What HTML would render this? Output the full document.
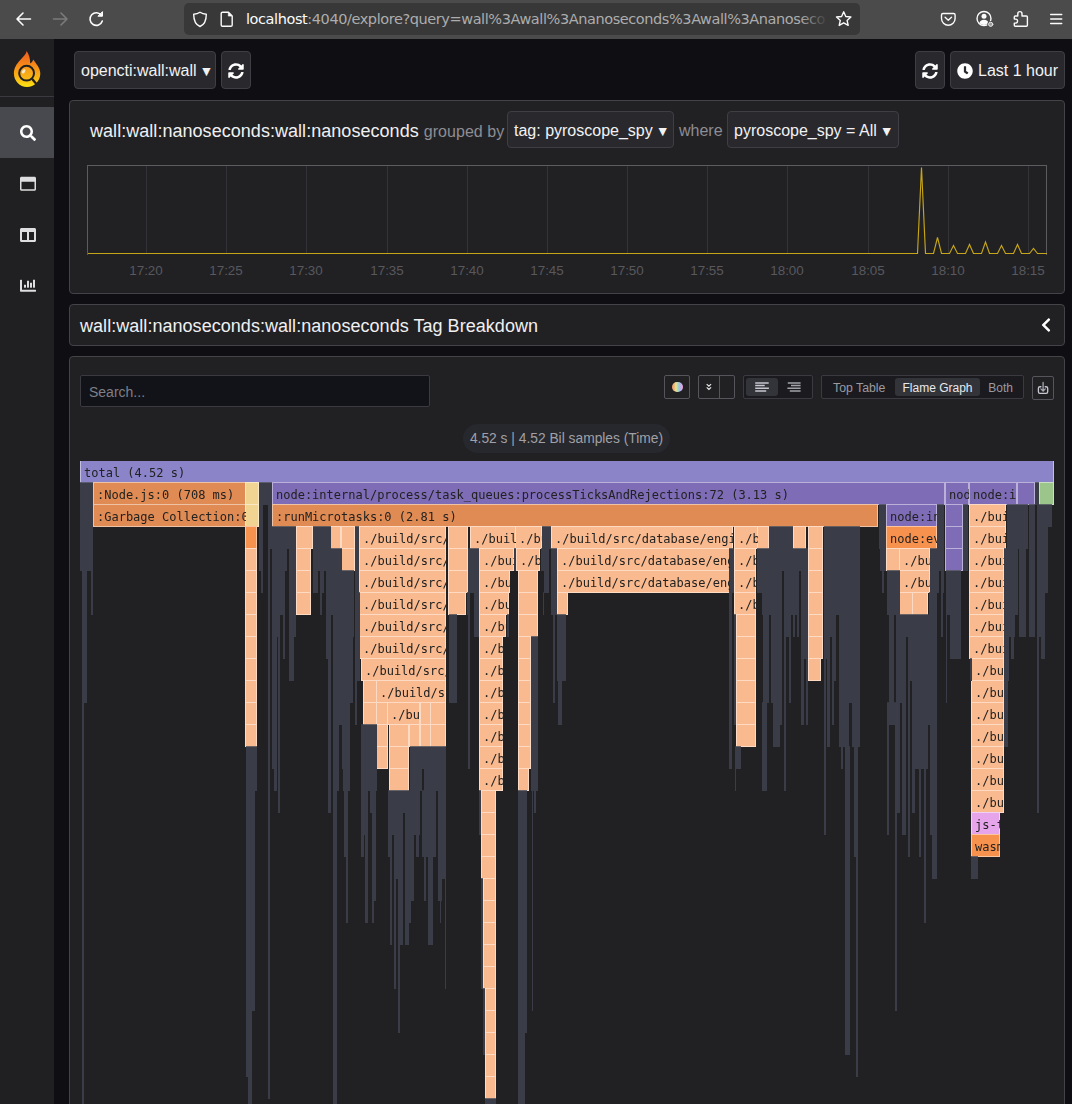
<!DOCTYPE html>
<html lang="en">
<head>
<meta charset="utf-8">
<title>Pyroscope - Tag Explorer</title>
<style>
*{box-sizing:border-box;margin:0;padding:0}
html,body{width:1072px;height:1104px;overflow:hidden;background:#0f0e13;font-family:"Liberation Sans",Arial,sans-serif;color:#e4e4e7}
.abs{position:absolute}
#chrome{position:absolute;left:0;top:0;width:1072px;height:39px;background:#4b4b4b}
#urlbar{position:absolute;left:184px;top:3px;width:676px;height:32px;border-radius:5px;background:#383838}
#urltext{position:absolute;left:246px;top:9px;font-family:"DejaVu Sans","Liberation Sans",sans-serif;font-size:14.5px;line-height:20px;color:#adadad;white-space:nowrap;width:580px;overflow:hidden;letter-spacing:-0.42px}
#urltext b{font-weight:normal;color:#fbfbfb}
#side{position:absolute;left:0;top:39px;width:54px;height:1065px;background:#202023}
#side .sep{position:absolute;left:0;top:57px;width:54px;height:1px;background:#3a3a40}
#side .act{position:absolute;left:0;top:68px;width:54px;height:51px;background:#48494f}
.btn{position:absolute;background:#29292d;border:1px solid #3e3e44;border-radius:4px;color:#f2f2f4;font-size:16px;line-height:37px;white-space:nowrap}
.panel{position:absolute;left:69px;width:996px;background:#212124;border:1px solid #434348;border-radius:4px}
.t18{letter-spacing:.04px;font-size:18px;color:#f0f0f2;white-space:nowrap}
.muted{color:#8d8d93}
.tick{position:absolute;top:262px;width:60px;margin-left:-30px;text-align:center;font-size:13.4px;line-height:18px;color:#58585d}
.vg{position:absolute;top:166px;width:1px;height:87px;background:#343438}
.tb{position:absolute;top:375px;height:24px;border:1px solid #55555b;border-radius:2px;background:#212124}
</style>
</head>
<body>
<!-- browser chrome -->
<div id="chrome">
  <svg class="abs" style="left:0;top:0" width="184" height="39" viewBox="0 0 184 39" fill="none" stroke-linecap="round" stroke-linejoin="round">
    <path d="M30.5 19H17.5M23 13l-6 6 6 6" stroke="#fbfbfb" stroke-width="1.6"/>
    <path d="M53.5 19H66.5M61 13l6 6-6 6" stroke="#7b7b7b" stroke-width="1.6"/>
    <path d="M101.5 15.5A6.3 6.3 0 1 0 102.3 21" stroke="#fbfbfb" stroke-width="1.6"/>
    <path d="M102.5 12v4.2h-4.2z" fill="#fbfbfb" stroke="#fbfbfb" stroke-width="1"/>
  </svg>
  <div id="urlbar"></div>
  <svg class="abs" style="left:184px;top:0" width="60" height="39" viewBox="184 0 60 39" fill="none" stroke="#fbfbfb" stroke-width="1.4" stroke-linejoin="round">
    <path d="M200 12.2c-2 1.4-4 1.9-6.3 2 0 6 1.600 10.300 6.300 12.300 4.700-2 6.300-6.300 6.300-12.300-2.300-.1-4.300-.6-6.300-2z"/>
    <path d="M222.500 12.200h6l3.700 3.700v9a1.300 1.300 0 0 1-1.300 1.300h-8.400a1.300 1.300 0 0 1-1.300-1.300v-11.400a1.300 1.300 0 0 1 1.300-1.300z"/>
    <path d="M228.300 12.400v3.700h3.700z" fill="#fbfbfb" stroke-width=".6"/>
  </svg>
  <div id="urltext"><b>localhost</b>:4040/explore?query=wall%3Awall%3Ananoseconds%3Awall%3Ananoseconds</div>
  <div class="abs" style="left:800px;top:6px;width:28px;height:26px;background:linear-gradient(90deg,rgba(56,56,56,0),#383838)"></div>
  <svg class="abs" style="left:830px;top:0" width="242" height="39" viewBox="830 0 242 39" fill="none" stroke="#fbfbfb" stroke-width="1.4" stroke-linejoin="round" stroke-linecap="round">
    <path d="M843.700 11.800l2.100 4.700 5.100.5-3.800 3.400 1.100 5-4.500-2.600-4.500 2.600 1.100-5-3.800-3.400 5.100-.5z"/>
    <path d="M943 13.500h10.600a1.500 1.500 0 0 1 1.500 1.500v3.400a6.800 6.800 0 0 1-13.600 0v-3.400a1.500 1.500 0 0 1 1.500-1.500z"/>
    <path d="M945.100 17.300l3.200 3 3.200-3"/>
    <circle cx="984" cy="18.500" r="7"/>
    <circle cx="984" cy="16.300" r="2.500" fill="#fbfbfb" stroke="none"/>
    <path d="M979.300 23c.8-2.300 2.600-3.300 4.700-3.300s3.900 1 4.700 3.300a6.500 6.500 0 0 1-9.400 0z" fill="#fbfbfb" stroke="none"/>
    <circle cx="990.700" cy="24.300" r="3.400" fill="#4b4b4b" stroke="none"/><circle cx="990.700" cy="24.300" r="2.100" fill="#9b9b9b" stroke="#e8e8e8" stroke-width="1"/>
    <path d="M1017.800 16v-2.300a2.100 2.100 0 0 1 4.200 0v2.300h4.400a1 1 0 0 1 1 1v8.300a1 1 0 0 1-1 1h-11.100a1 1 0 0 1-1-1v-2.200h1.300a2 2 0 0 0 0-4h-1.300v-2.100a1 1 0 0 1 1-1z"/>
    <path d="M1050.700 14.500h11M1050.700 19h11M1050.700 23.500h11" stroke-width="1.500"/>
  </svg>
</div>

<!-- sidebar -->
<div id="side">
  <div class="sep"></div>
  <div class="act"></div>
</div>
<svg class="abs" style="left:0;top:39px" width="54" height="280" viewBox="0 39 54 280">
  <defs>
    <linearGradient id="lg" x1="0" y1="0" x2="0" y2="1">
      <stop offset="0" stop-color="#ee5a22"/><stop offset=".4" stop-color="#f58a18"/><stop offset=".75" stop-color="#f9b814"/><stop offset="1" stop-color="#fee512"/>
    </linearGradient>
    <linearGradient id="lg2" x1="0" y1="0" x2="0" y2="1"><stop offset="0" stop-color="#f7961a"/><stop offset="1" stop-color="#f9bd15"/></linearGradient>
  </defs>
  <path d="M26.600 50.900C25.600 57.500 13.900 62 13.900 73.600C13.900 81.200 19.800 87.100 27 87.100C34.300 87.100 40.300 81.200 40.300 73.600C40.300 67.800 36.600 64.500 33.200 59.500C32.700 61.400 31.600 62.700 30.200 63.500C30.300 58.500 28.800 54 26.600 50.900Z" fill="url(#lg)"/>
  <circle cx="26.600" cy="73.200" r="7.400" fill="url(#lg2)" stroke="#1f1f22" stroke-width="2"/>
  <ellipse cx="23.600" cy="71.300" rx="1.500" ry="2.300" transform="rotate(35 23.600 71.300)" fill="#fff" opacity=".75"/>
  <path d="M32.200 79.100l4.200 4.800" stroke="#1f1f22" stroke-width="2.300" stroke-linecap="butt"/>
  <svg x="20" y="125" width="16" height="16" viewBox="0 0 512 512"><path fill="#fff" d="M505 442.700L405.300 343c-4.500-4.500-10.600-7-17-7H372c27.600-35.300 44-79.700 44-128C416 93.100 322.900 0 208 0S0 93.100 0 208s93.100 208 208 208c48.300 0 92.700-16.400 128-44v16.300c0 6.400 2.500 12.500 7 17l99.700 99.700c9.400 9.400 24.600 9.400 33.900 0l28.300-28.300c9.400-9.400 9.400-24.600.1-34zM208 336c-70.700 0-128-57.200-128-128 0-70.700 57.200-128 128-128 70.700 0 128 57.200 128 128 0 70.700-57.200 128-128 128z"/></svg>
  <svg x="20" y="175.800" width="16" height="16" viewBox="0 0 512 512"><path fill="#dedee0" d="M464 32H48C21.500 32 0 53.500 0 80v352c0 26.500 21.500 48 48 48h416c26.500 0 48-21.500 48-48V80c0-26.500-21.500-48-48-48zm0 394c0 3.300-2.700 6-6 6H54c-3.300 0-6-2.700-6-6V192h416v234z"/></svg>
  <svg x="20" y="226.900" width="16" height="16" viewBox="0 0 512 512"><path fill="#dedee0" d="M464 32H48C21.490 32 0 53.490 0 80v352c0 26.510 21.490 48 48 48h416c26.510 0 48-21.490 48-48V80c0-26.510-21.490-48-48-48zM224 416H64V160h160v256zm224 0H288V160h160v256z"/></svg>
  <svg x="20" y="277.700" width="16" height="16" viewBox="0 0 512 512"><path fill="#dedee0" d="M332.800 320h38.400c6.400 0 12.800-6.400 12.800-12.800V172.800c0-6.400-6.400-12.800-12.800-12.800h-38.400c-6.400 0-12.800 6.400-12.800 12.800v134.400c0 6.400 6.400 12.800 12.800 12.800zm96 0h38.400c6.400 0 12.800-6.400 12.800-12.800V76.800c0-6.400-6.400-12.800-12.800-12.800h-38.400c-6.400 0-12.800 6.400-12.800 12.800v230.400c0 6.400 6.400 12.800 12.800 12.800zm-288 0h38.400c6.400 0 12.800-6.400 12.800-12.800v-70.400c0-6.400-6.400-12.800-12.800-12.800h-38.400c-6.400 0-12.800 6.400-12.800 12.800v70.400c0 6.400 6.400 12.800 12.800 12.800zm96 0h38.400c6.400 0 12.800-6.400 12.800-12.800V108.800c0-6.400-6.400-12.800-12.800-12.800h-38.400c-6.400 0-12.800 6.400-12.800 12.800v198.400c0 6.400 6.400 12.800 12.800 12.800zM496 384H64V80c0-8.840-7.160-16-16-16H16C7.160 64 0 71.160 0 80v336c0 17.670 14.330 32 32 32h464c8.840 0 16-7.160 16-16v-32c0-8.840-7.160-16-16-16z"/></svg>
</svg>

<!-- toolbar -->
<div class="btn" style="left:74px;top:51px;width:142px;height:38px;padding-left:6px">opencti:wall:wall <span style="font-size:14px;margin-left:-1.5px">&#9660;</span></div>
<div class="btn" style="left:221px;top:51px;width:30px;height:38px"></div>
<div class="btn" style="left:915px;top:51px;width:30px;height:38px"></div>
<div class="btn" style="left:950px;top:51px;width:115px;height:38px;padding-left:27px">Last 1 hour</div>
<svg class="abs" style="left:228px;top:63px" width="16" height="16" viewBox="0 0 512 512"><path id="syncp" fill="#fff" d="M370.72 133.28C339.458 104.008 298.888 87.962 255.848 88c-77.458.068-144.328 53.178-162.791 126.85-1.344 5.363-6.122 9.15-11.651 9.15H24.103c-7.498 0-13.194-6.807-11.807-14.176C33.933 94.924 134.813 8 256 8c66.448 0 126.791 26.136 171.315 68.685L463.03 40.97C478.149 25.851 504 36.559 504 57.941V192c0 13.255-10.745 24-24 24H345.941c-21.382 0-32.09-25.851-16.971-40.971l41.75-41.749zM32 296h134.059c21.382 0 32.09 25.851 16.971 40.971l-41.75 41.75c31.262 29.273 71.835 45.319 114.876 45.28 77.418-.07 144.315-53.144 162.787-126.849 1.344-5.363 6.122-9.15 11.651-9.15h57.304c7.498 0 13.194 6.807 11.807 14.176C478.067 417.076 377.187 504 256 504c-66.448 0-126.791-26.136-171.315-68.685L48.970 471.030C33.851 486.149 8 475.441 8 454.059V320c0-13.255 10.745-24 24-24z"/></svg>
<svg class="abs" style="left:922px;top:63px" width="16" height="16" viewBox="0 0 512 512"><use href="#syncp"/></svg>
<svg class="abs" style="left:957px;top:63px" width="16" height="16" viewBox="0 0 512 512"><path fill="#fff" d="M256 8C119 8 8 119 8 256s111 248 248 248 248-111 248-248S393 8 256 8zm57.100 350.100L224.900 294c-3.100-2.300-4.900-5.900-4.900-9.700V116c0-6.600 5.400-12 12-12h48c6.600 0 12 5.400 12 12v137.700l63.500 46.200c5.400 3.900 6.500 11.400 2.600 16.800l-28.200 38.800c-3.900 5.300-11.400 6.500-16.800 2.600z"/></svg>

<!-- panel 1 : timeline -->
<div class="panel" style="top:100px;height:194px"></div>
<div class="abs t18" style="left:90px;top:119px;line-height:24px">wall:wall:nanoseconds:wall:nanoseconds <span class="muted" style="font-size:16px">grouped by</span></div>
<div class="btn" style="left:507px;top:111px;width:167px;height:37px;padding-left:6px">tag: pyroscope_spy <span style="font-size:14px;margin-left:-1.5px">&#9660;</span></div>
<div class="abs muted" style="left:679px;top:119px;font-size:16px;line-height:24px">where</div>
<div class="btn" style="left:727px;top:111px;width:172px;height:37px;padding-left:6px">pyroscope_spy = All <span style="font-size:14px;margin-left:-1.5px">&#9660;</span></div>
<div class="abs" style="left:87px;top:165px;width:960px;height:90px;border:1px solid #5b5b60;border-bottom:none"></div>
<div class="vg" style="left:146px"></div><div class="vg" style="left:226px"></div><div class="vg" style="left:306px"></div><div class="vg" style="left:387px"></div><div class="vg" style="left:467px"></div><div class="vg" style="left:547px"></div><div class="vg" style="left:627px"></div><div class="vg" style="left:707px"></div><div class="vg" style="left:787px"></div><div class="vg" style="left:868px"></div><div class="vg" style="left:948px"></div><div class="vg" style="left:1028px"></div>
<svg class="abs" style="left:87px;top:160px" width="962" height="98" viewBox="87 160 962 98">
  <path d="M88 253.500H917.500L921.500 167.500L925.500 253.500H933.500L937.500 237.500L941.500 253.500H949.500L953.500 245.500L957.500 253.500H965.500L969.500 244.500L973.500 253.500H981.500L985.500 242L989.500 253.500H997.500L1001.500 245.500L1005.500 253.500H1013.500L1017.500 244.500L1021.500 253.500H1029.500L1033.500 248.500L1037.500 253.500H1047" fill="none" stroke="#c6a518" stroke-width="1.150" stroke-linejoin="miter"/>
</svg>
<div class="tick" style="left:146px">17:20</div><div class="tick" style="left:226px">17:25</div><div class="tick" style="left:306px">17:30</div><div class="tick" style="left:387px">17:35</div><div class="tick" style="left:467px">17:40</div><div class="tick" style="left:547px">17:45</div><div class="tick" style="left:627px">17:50</div><div class="tick" style="left:707px">17:55</div><div class="tick" style="left:787px">18:00</div><div class="tick" style="left:868px">18:05</div><div class="tick" style="left:948px">18:10</div><div class="tick" style="left:1028px">18:15</div>

<!-- panel 2 : title -->
<div class="panel" style="top:304px;height:42px"></div>
<div class="abs t18" style="left:80px;top:314px;line-height:24px">wall:wall:nanoseconds:wall:nanoseconds Tag Breakdown</div>
<svg class="abs" style="left:1041px;top:317px" width="10" height="16" viewBox="0 0 320 512"><path fill="#fff" d="M34.520 239.030L228.870 44.690c9.370-9.370 24.570-9.370 33.940 0l22.670 22.670c9.360 9.360 9.370 24.520.04 33.900L131.490 256l154.020 154.750c9.340 9.380 9.320 24.540-.04 33.900l-22.670 22.670c-9.370 9.370-24.570 9.370-33.940 0L34.520 272.970c-9.370-9.370-9.370-24.570 0-33.940z"/></svg>

<!-- panel 3 : flamegraph -->
<div class="panel" style="top:356px;height:760px"></div>
<div class="abs" style="left:80px;top:375px;width:350px;height:32px;background:#121318;border:1px solid #3a3a40;border-radius:2px;padding-left:8px;padding-top:1px;font-size:14px;line-height:31px;color:#7f7f87">Search...</div>

<div class="tb" style="left:664px;width:26px"></div>
<div class="abs" style="left:672px;top:381.600px;width:10.500px;height:10.500px;border-radius:6px;background:linear-gradient(90deg,#e8a47c 0%,#f0b070 18%,#f0e38c 36%,#9fd8c8 55%,#a9b8f0 72%,#e7a6e0 90%)"></div>
<div class="tb" style="left:698px;width:37px"></div>
<div class="abs" style="left:719px;top:376px;width:1px;height:22px;background:#55555b"></div>
<svg class="abs" style="left:703px;top:381px" width="12" height="12" viewBox="0 0 12 12"><path d="M3.700 3.100L5.900 5.200l2.200-2.100M3.700 6.400L5.900 8.500l2.200-2.100" fill="none" stroke="#e8e8ea" stroke-width="1.150"/></svg>
<div class="tb" style="left:743px;width:70px;border-color:#3a3a40;background:#1b1b1f"></div>
<div class="abs" style="left:746px;top:378px;width:32px;height:18px;background:#33343a;border-radius:3px"></div>
<svg class="abs" style="left:746px;top:378px" width="64" height="19" viewBox="0 0 64 19"><path d="M9.200 4.900h13.500M9.200 7.600h9.500M9.200 10.300h13.700M9.200 13h11" stroke="#c8c8d0" stroke-width="1.500"/><path d="M41.800 4.900h12.800M45 7.600h9.600M41.400 10.300h13.200M43.800 13h10.800" stroke="#a2a2aa" stroke-width="1.500"/></svg>
<div class="tb" style="left:821px;width:203px;border-color:#3a3a40;background:#1b1b1f"></div>
<div class="abs" style="left:894.500px;top:378px;width:85.500px;height:18px;background:#33343a;border-radius:3px"></div>
<div class="abs" style="left:833px;top:379px;font-size:12.300px;line-height:19px;color:#9a9aa0;white-space:nowrap">Top Table</div>
<div class="abs" style="left:902.500px;top:379px;font-size:12px;line-height:19px;color:#e8e8ec;white-space:nowrap">Flame Graph</div>
<div class="abs" style="left:988.300px;top:379px;font-size:12px;line-height:19px;color:#9a9aa0;white-space:nowrap">Both</div>
<div class="tb" style="left:1032px;width:22px;top:376px"></div>
<svg class="abs" style="left:1032px;top:376px" width="22" height="24" viewBox="0 0 22 24" fill="none" stroke-linecap="round"><path d="M8.900 10.750H8a1.600 1.600 0 0 0-1.600 1.600v3.500a1.600 1.600 0 0 0 1.600 1.600h6.100a1.600 1.600 0 0 0 1.600-1.600v-3.500a1.600 1.600 0 0 0-1.600-1.600h-.9" stroke="#c9c9d4" stroke-width="1.300"/><path d="M11.100 6.400v8M8.900 12.900l2.200 2.200 2.200-2.200" stroke="#a8a8b2" stroke-width="1.300"/></svg>

<div class="abs" style="left:463px;top:423.5px;width:207px;height:29px;border-radius:14.5px;background:#26282e"></div>
<div class="abs" style="left:463px;top:424.500px;width:207px;text-align:center;font-size:13.8px;line-height:28px;color:#a0a0a6;white-space:nowrap">4.52 s | 4.52 Bil samples (Time)</div>

<svg class="abs" style="left:0;top:0" width="1072" height="1104" viewBox="0 0 1072 1104" shape-rendering="crispEdges" font-family="'DejaVu Sans Mono','Liberation Mono',monospace" font-size="12" fill="#222">
<rect x="80" y="461" width="974" height="22" fill="#c2bee2"/>
<rect x="81" y="461" width="972" height="21" fill="#8b84c9"/>
<rect x="93" y="482" width="153" height="23" fill="#eec2a4"/>
<rect x="94" y="483" width="151" height="21" fill="#df8b53"/>
<rect x="245" y="482" width="14" height="23" fill="#f8e8c5"/>
<rect x="246" y="483" width="12" height="21" fill="#f2d492"/>
<rect x="272" y="482" width="673" height="23" fill="#bbb1d8"/>
<rect x="273" y="483" width="671" height="21" fill="#7e6cb6"/>
<rect x="945" y="482" width="24" height="23" fill="#bbb1d8"/>
<rect x="946" y="483" width="22" height="21" fill="#7e6cb6"/>
<rect x="969" y="482" width="48" height="23" fill="#bbb1d8"/>
<rect x="970" y="483" width="46" height="21" fill="#7e6cb6"/>
<rect x="1017" y="482" width="18" height="23" fill="#bbb1d8"/>
<rect x="1018" y="483" width="16" height="21" fill="#7e6cb6"/>
<rect x="1039" y="482" width="15" height="23" fill="#cae0c2"/>
<rect x="1040" y="483" width="13" height="21" fill="#9bc58b"/>
<rect x="93" y="504" width="153" height="23" fill="#eec2a4"/>
<rect x="94" y="505" width="151" height="21" fill="#df8b53"/>
<rect x="245" y="504" width="14" height="23" fill="#f8e8c5"/>
<rect x="246" y="505" width="12" height="21" fill="#f2d492"/>
<rect x="272" y="504" width="606" height="23" fill="#eec2a4"/>
<rect x="273" y="505" width="604" height="21" fill="#df8b53"/>
<rect x="886" y="504" width="51" height="23" fill="#bbb1d8"/>
<rect x="887" y="505" width="49" height="21" fill="#7e6cb6"/>
<rect x="945" y="504" width="18" height="23" fill="#bbb1d8"/>
<rect x="946" y="505" width="16" height="21" fill="#7e6cb6"/>
<rect x="969" y="504" width="37" height="23" fill="#fcdac4"/>
<rect x="970" y="505" width="35" height="21" fill="#f9ba8f"/>
<rect x="245" y="526" width="12" height="23" fill="#fbc5a1"/>
<rect x="246" y="527" width="10" height="21" fill="#f7924e"/>
<rect x="296" y="526" width="17" height="23" fill="#fcdac4"/>
<rect x="297" y="527" width="15" height="21" fill="#f9ba8f"/>
<rect x="330" y="526" width="11" height="23" fill="#fcdac4"/>
<rect x="331" y="527" width="9" height="21" fill="#f9ba8f"/>
<rect x="341" y="526" width="14" height="23" fill="#fcdac4"/>
<rect x="342" y="527" width="12" height="21" fill="#f9ba8f"/>
<rect x="359" y="526" width="87" height="23" fill="#fcdac4"/>
<rect x="360" y="527" width="85" height="21" fill="#f9ba8f"/>
<rect x="448" y="526" width="20" height="23" fill="#fcdac4"/>
<rect x="449" y="527" width="18" height="21" fill="#f9ba8f"/>
<rect x="470" y="526" width="46" height="23" fill="#fcdac4"/>
<rect x="471" y="527" width="44" height="21" fill="#f9ba8f"/>
<rect x="515" y="526" width="27" height="23" fill="#fcdac4"/>
<rect x="516" y="527" width="25" height="21" fill="#f9ba8f"/>
<rect x="551" y="526" width="182" height="23" fill="#fcdac4"/>
<rect x="552" y="527" width="180" height="21" fill="#f9ba8f"/>
<rect x="734" y="526" width="24" height="23" fill="#fcdac4"/>
<rect x="735" y="527" width="22" height="21" fill="#f9ba8f"/>
<rect x="757" y="526" width="12" height="23" fill="#fcdac4"/>
<rect x="758" y="527" width="10" height="21" fill="#f9ba8f"/>
<rect x="793" y="526" width="13" height="23" fill="#fcdac4"/>
<rect x="794" y="527" width="11" height="21" fill="#f9ba8f"/>
<rect x="808" y="526" width="15" height="23" fill="#fcdac4"/>
<rect x="809" y="527" width="13" height="21" fill="#f9ba8f"/>
<rect x="886" y="526" width="51" height="23" fill="#fbc5a1"/>
<rect x="887" y="527" width="49" height="21" fill="#f7924e"/>
<rect x="945" y="526" width="18" height="23" fill="#bbb1d8"/>
<rect x="946" y="527" width="16" height="21" fill="#7e6cb6"/>
<rect x="969" y="526" width="37" height="23" fill="#fcdac4"/>
<rect x="970" y="527" width="35" height="21" fill="#f9ba8f"/>
<rect x="245" y="548" width="12" height="23" fill="#fcdac4"/>
<rect x="246" y="549" width="10" height="21" fill="#f9ba8f"/>
<rect x="296" y="548" width="15" height="23" fill="#fcdac4"/>
<rect x="297" y="549" width="13" height="21" fill="#f9ba8f"/>
<rect x="341" y="548" width="14" height="23" fill="#fcdac4"/>
<rect x="342" y="549" width="12" height="21" fill="#f9ba8f"/>
<rect x="359" y="548" width="87" height="23" fill="#fcdac4"/>
<rect x="360" y="549" width="85" height="21" fill="#f9ba8f"/>
<rect x="448" y="548" width="20" height="23" fill="#fcdac4"/>
<rect x="449" y="549" width="18" height="21" fill="#f9ba8f"/>
<rect x="479" y="548" width="35" height="23" fill="#fcdac4"/>
<rect x="480" y="549" width="33" height="21" fill="#f9ba8f"/>
<rect x="516" y="548" width="24" height="23" fill="#fcdac4"/>
<rect x="517" y="549" width="22" height="21" fill="#f9ba8f"/>
<rect x="557" y="548" width="173" height="23" fill="#fcdac4"/>
<rect x="558" y="549" width="171" height="21" fill="#f9ba8f"/>
<rect x="734" y="548" width="22" height="23" fill="#fcdac4"/>
<rect x="735" y="549" width="20" height="21" fill="#f9ba8f"/>
<rect x="808" y="548" width="15" height="23" fill="#fcdac4"/>
<rect x="809" y="549" width="13" height="21" fill="#f9ba8f"/>
<rect x="886" y="548" width="14" height="23" fill="#fcdac4"/>
<rect x="887" y="549" width="12" height="21" fill="#f9ba8f"/>
<rect x="899" y="548" width="31" height="23" fill="#fcdac4"/>
<rect x="900" y="549" width="29" height="21" fill="#f9ba8f"/>
<rect x="945" y="548" width="18" height="23" fill="#bbb1d8"/>
<rect x="946" y="549" width="16" height="21" fill="#7e6cb6"/>
<rect x="969" y="548" width="35" height="23" fill="#fcdac4"/>
<rect x="970" y="549" width="33" height="21" fill="#f9ba8f"/>
<rect x="245" y="570" width="12" height="23" fill="#fcdac4"/>
<rect x="246" y="571" width="10" height="21" fill="#f9ba8f"/>
<rect x="296" y="570" width="15" height="23" fill="#fcdac4"/>
<rect x="297" y="571" width="13" height="21" fill="#f9ba8f"/>
<rect x="359" y="570" width="87" height="23" fill="#fcdac4"/>
<rect x="360" y="571" width="85" height="21" fill="#f9ba8f"/>
<rect x="448" y="570" width="20" height="23" fill="#fcdac4"/>
<rect x="449" y="571" width="18" height="21" fill="#f9ba8f"/>
<rect x="479" y="570" width="31" height="23" fill="#fcdac4"/>
<rect x="480" y="571" width="29" height="21" fill="#f9ba8f"/>
<rect x="518" y="570" width="20" height="23" fill="#fcdac4"/>
<rect x="519" y="571" width="18" height="21" fill="#f9ba8f"/>
<rect x="557" y="570" width="173" height="23" fill="#fcdac4"/>
<rect x="558" y="571" width="171" height="21" fill="#f9ba8f"/>
<rect x="734" y="570" width="22" height="23" fill="#fcdac4"/>
<rect x="735" y="571" width="20" height="21" fill="#f9ba8f"/>
<rect x="808" y="570" width="15" height="23" fill="#fcdac4"/>
<rect x="809" y="571" width="13" height="21" fill="#f9ba8f"/>
<rect x="899" y="570" width="31" height="23" fill="#fcdac4"/>
<rect x="900" y="571" width="29" height="21" fill="#f9ba8f"/>
<rect x="969" y="570" width="35" height="23" fill="#fcdac4"/>
<rect x="970" y="571" width="33" height="21" fill="#f9ba8f"/>
<rect x="245" y="592" width="12" height="23" fill="#fcdac4"/>
<rect x="246" y="593" width="10" height="21" fill="#f9ba8f"/>
<rect x="296" y="592" width="15" height="23" fill="#fcdac4"/>
<rect x="297" y="593" width="13" height="21" fill="#f9ba8f"/>
<rect x="359" y="592" width="87" height="23" fill="#fcdac4"/>
<rect x="360" y="593" width="85" height="21" fill="#f9ba8f"/>
<rect x="448" y="592" width="18" height="23" fill="#fcdac4"/>
<rect x="449" y="593" width="16" height="21" fill="#f9ba8f"/>
<rect x="479" y="592" width="30" height="23" fill="#fcdac4"/>
<rect x="480" y="593" width="28" height="21" fill="#f9ba8f"/>
<rect x="518" y="592" width="20" height="23" fill="#fcdac4"/>
<rect x="519" y="593" width="18" height="21" fill="#f9ba8f"/>
<rect x="557" y="592" width="11" height="23" fill="#fcdac4"/>
<rect x="558" y="593" width="9" height="21" fill="#f9ba8f"/>
<rect x="734" y="592" width="22" height="23" fill="#fcdac4"/>
<rect x="735" y="593" width="20" height="21" fill="#f9ba8f"/>
<rect x="808" y="592" width="15" height="23" fill="#fcdac4"/>
<rect x="809" y="593" width="13" height="21" fill="#f9ba8f"/>
<rect x="899" y="592" width="14" height="23" fill="#fcdac4"/>
<rect x="900" y="593" width="12" height="21" fill="#f9ba8f"/>
<rect x="912" y="592" width="16" height="23" fill="#fcdac4"/>
<rect x="913" y="593" width="14" height="21" fill="#f9ba8f"/>
<rect x="969" y="592" width="35" height="23" fill="#fcdac4"/>
<rect x="970" y="593" width="33" height="21" fill="#f9ba8f"/>
<rect x="245" y="614" width="12" height="23" fill="#fcdac4"/>
<rect x="246" y="615" width="10" height="21" fill="#f9ba8f"/>
<rect x="359" y="614" width="87" height="23" fill="#fcdac4"/>
<rect x="360" y="615" width="85" height="21" fill="#f9ba8f"/>
<rect x="479" y="614" width="27" height="23" fill="#fcdac4"/>
<rect x="480" y="615" width="25" height="21" fill="#f9ba8f"/>
<rect x="518" y="614" width="20" height="23" fill="#fcdac4"/>
<rect x="519" y="615" width="18" height="21" fill="#f9ba8f"/>
<rect x="736" y="614" width="20" height="23" fill="#fcdac4"/>
<rect x="737" y="615" width="18" height="21" fill="#f9ba8f"/>
<rect x="808" y="614" width="15" height="23" fill="#fcdac4"/>
<rect x="809" y="615" width="13" height="21" fill="#f9ba8f"/>
<rect x="969" y="614" width="35" height="23" fill="#fcdac4"/>
<rect x="970" y="615" width="33" height="21" fill="#f9ba8f"/>
<rect x="245" y="636" width="12" height="23" fill="#fcdac4"/>
<rect x="246" y="637" width="10" height="21" fill="#f9ba8f"/>
<rect x="359" y="636" width="87" height="23" fill="#fcdac4"/>
<rect x="360" y="637" width="85" height="21" fill="#f9ba8f"/>
<rect x="479" y="636" width="24" height="23" fill="#fcdac4"/>
<rect x="480" y="637" width="22" height="21" fill="#f9ba8f"/>
<rect x="518" y="636" width="13" height="23" fill="#fcdac4"/>
<rect x="519" y="637" width="11" height="21" fill="#f9ba8f"/>
<rect x="736" y="636" width="20" height="23" fill="#fcdac4"/>
<rect x="737" y="637" width="18" height="21" fill="#f9ba8f"/>
<rect x="808" y="636" width="15" height="23" fill="#fcdac4"/>
<rect x="809" y="637" width="13" height="21" fill="#f9ba8f"/>
<rect x="969" y="636" width="35" height="23" fill="#fcdac4"/>
<rect x="970" y="637" width="33" height="21" fill="#f9ba8f"/>
<rect x="245" y="658" width="12" height="23" fill="#fcdac4"/>
<rect x="246" y="659" width="10" height="21" fill="#f9ba8f"/>
<rect x="361" y="658" width="85" height="23" fill="#fcdac4"/>
<rect x="362" y="659" width="83" height="21" fill="#f9ba8f"/>
<rect x="479" y="658" width="24" height="23" fill="#fcdac4"/>
<rect x="480" y="659" width="22" height="21" fill="#f9ba8f"/>
<rect x="518" y="658" width="13" height="23" fill="#fcdac4"/>
<rect x="519" y="659" width="11" height="21" fill="#f9ba8f"/>
<rect x="736" y="658" width="20" height="23" fill="#fcdac4"/>
<rect x="737" y="659" width="18" height="21" fill="#f9ba8f"/>
<rect x="808" y="658" width="13" height="23" fill="#fcdac4"/>
<rect x="809" y="659" width="11" height="21" fill="#f9ba8f"/>
<rect x="971" y="658" width="33" height="23" fill="#fcdac4"/>
<rect x="972" y="659" width="31" height="21" fill="#f9ba8f"/>
<rect x="245" y="680" width="12" height="23" fill="#fcdac4"/>
<rect x="246" y="681" width="10" height="21" fill="#f9ba8f"/>
<rect x="363" y="680" width="14" height="23" fill="#fcdac4"/>
<rect x="364" y="681" width="12" height="21" fill="#f9ba8f"/>
<rect x="376" y="680" width="70" height="23" fill="#fcdac4"/>
<rect x="377" y="681" width="68" height="21" fill="#f9ba8f"/>
<rect x="479" y="680" width="24" height="23" fill="#fcdac4"/>
<rect x="480" y="681" width="22" height="21" fill="#f9ba8f"/>
<rect x="518" y="680" width="13" height="23" fill="#fcdac4"/>
<rect x="519" y="681" width="11" height="21" fill="#f9ba8f"/>
<rect x="736" y="680" width="20" height="23" fill="#fcdac4"/>
<rect x="737" y="681" width="18" height="21" fill="#f9ba8f"/>
<rect x="971" y="680" width="33" height="23" fill="#fcdac4"/>
<rect x="972" y="681" width="31" height="21" fill="#f9ba8f"/>
<rect x="245" y="702" width="12" height="23" fill="#fcdac4"/>
<rect x="246" y="703" width="10" height="21" fill="#f9ba8f"/>
<rect x="363" y="702" width="14" height="23" fill="#fcdac4"/>
<rect x="364" y="703" width="12" height="21" fill="#f9ba8f"/>
<rect x="376" y="702" width="12" height="23" fill="#fcdac4"/>
<rect x="377" y="703" width="10" height="21" fill="#f9ba8f"/>
<rect x="387" y="702" width="33" height="23" fill="#fcdac4"/>
<rect x="388" y="703" width="31" height="21" fill="#f9ba8f"/>
<rect x="420" y="702" width="11" height="23" fill="#fcdac4"/>
<rect x="421" y="703" width="9" height="21" fill="#f9ba8f"/>
<rect x="430" y="702" width="16" height="23" fill="#fcdac4"/>
<rect x="431" y="703" width="14" height="21" fill="#f9ba8f"/>
<rect x="479" y="702" width="24" height="23" fill="#fcdac4"/>
<rect x="480" y="703" width="22" height="21" fill="#f9ba8f"/>
<rect x="518" y="702" width="13" height="23" fill="#fcdac4"/>
<rect x="519" y="703" width="11" height="21" fill="#f9ba8f"/>
<rect x="736" y="702" width="20" height="23" fill="#fcdac4"/>
<rect x="737" y="703" width="18" height="21" fill="#f9ba8f"/>
<rect x="971" y="702" width="33" height="23" fill="#fcdac4"/>
<rect x="972" y="703" width="31" height="21" fill="#f9ba8f"/>
<rect x="245" y="724" width="12" height="23" fill="#fcdac4"/>
<rect x="246" y="725" width="10" height="21" fill="#f9ba8f"/>
<rect x="376" y="724" width="12" height="23" fill="#fcdac4"/>
<rect x="377" y="725" width="10" height="21" fill="#f9ba8f"/>
<rect x="389" y="724" width="20" height="23" fill="#fcdac4"/>
<rect x="390" y="725" width="18" height="21" fill="#f9ba8f"/>
<rect x="409" y="724" width="11" height="23" fill="#fcdac4"/>
<rect x="410" y="725" width="9" height="21" fill="#f9ba8f"/>
<rect x="420" y="724" width="11" height="23" fill="#fcdac4"/>
<rect x="421" y="725" width="9" height="21" fill="#f9ba8f"/>
<rect x="430" y="724" width="16" height="23" fill="#fcdac4"/>
<rect x="431" y="725" width="14" height="21" fill="#f9ba8f"/>
<rect x="479" y="724" width="24" height="23" fill="#fcdac4"/>
<rect x="480" y="725" width="22" height="21" fill="#f9ba8f"/>
<rect x="518" y="724" width="13" height="23" fill="#fcdac4"/>
<rect x="519" y="725" width="11" height="21" fill="#f9ba8f"/>
<rect x="736" y="724" width="20" height="23" fill="#fcdac4"/>
<rect x="737" y="725" width="18" height="21" fill="#f9ba8f"/>
<rect x="971" y="724" width="33" height="23" fill="#fcdac4"/>
<rect x="972" y="725" width="31" height="21" fill="#f9ba8f"/>
<rect x="376" y="746" width="12" height="23" fill="#fcdac4"/>
<rect x="377" y="747" width="10" height="21" fill="#f9ba8f"/>
<rect x="389" y="746" width="20" height="23" fill="#fcdac4"/>
<rect x="390" y="747" width="18" height="21" fill="#f9ba8f"/>
<rect x="479" y="746" width="24" height="23" fill="#fcdac4"/>
<rect x="480" y="747" width="22" height="21" fill="#f9ba8f"/>
<rect x="518" y="746" width="13" height="23" fill="#fcdac4"/>
<rect x="519" y="747" width="11" height="21" fill="#f9ba8f"/>
<rect x="971" y="746" width="33" height="23" fill="#fcdac4"/>
<rect x="972" y="747" width="31" height="21" fill="#f9ba8f"/>
<rect x="389" y="768" width="20" height="23" fill="#fcdac4"/>
<rect x="390" y="769" width="18" height="21" fill="#f9ba8f"/>
<rect x="479" y="768" width="24" height="23" fill="#fcdac4"/>
<rect x="480" y="769" width="22" height="21" fill="#f9ba8f"/>
<rect x="518" y="768" width="11" height="23" fill="#fcdac4"/>
<rect x="519" y="769" width="9" height="21" fill="#f9ba8f"/>
<rect x="971" y="768" width="33" height="23" fill="#fcdac4"/>
<rect x="972" y="769" width="31" height="21" fill="#f9ba8f"/>
<rect x="481" y="790" width="15" height="23" fill="#fcdac4"/>
<rect x="482" y="791" width="13" height="21" fill="#f9ba8f"/>
<rect x="971" y="790" width="33" height="23" fill="#fcdac4"/>
<rect x="972" y="791" width="31" height="21" fill="#f9ba8f"/>
<rect x="481" y="812" width="15" height="23" fill="#fcdac4"/>
<rect x="482" y="813" width="13" height="21" fill="#f9ba8f"/>
<rect x="971" y="812" width="29" height="23" fill="#f2cff4"/>
<rect x="972" y="813" width="27" height="21" fill="#e6a5ea"/>
<rect x="481" y="834" width="15" height="23" fill="#fcdac4"/>
<rect x="482" y="835" width="13" height="21" fill="#f9ba8f"/>
<rect x="971" y="834" width="29" height="23" fill="#fbc5a1"/>
<rect x="972" y="835" width="27" height="21" fill="#f7924e"/>
<rect x="481" y="856" width="15" height="23" fill="#fcdac4"/>
<rect x="482" y="857" width="13" height="21" fill="#f9ba8f"/>
<rect x="483" y="878" width="13" height="23" fill="#fcdac4"/>
<rect x="484" y="879" width="11" height="21" fill="#f9ba8f"/>
<rect x="483" y="900" width="13" height="23" fill="#fcdac4"/>
<rect x="484" y="901" width="11" height="21" fill="#f9ba8f"/>
<rect x="483" y="922" width="13" height="23" fill="#fcdac4"/>
<rect x="484" y="923" width="11" height="21" fill="#f9ba8f"/>
<rect x="483" y="944" width="13" height="23" fill="#fcdac4"/>
<rect x="484" y="945" width="11" height="21" fill="#f9ba8f"/>
<rect x="483" y="966" width="13" height="23" fill="#fcdac4"/>
<rect x="484" y="967" width="11" height="21" fill="#f9ba8f"/>
<rect x="485" y="988" width="11" height="23" fill="#fcdac4"/>
<rect x="486" y="989" width="9" height="21" fill="#f9ba8f"/>
<rect x="485" y="1010" width="11" height="23" fill="#fcdac4"/>
<rect x="486" y="1011" width="9" height="21" fill="#f9ba8f"/>
<rect x="485" y="1032" width="11" height="23" fill="#fcdac4"/>
<rect x="486" y="1033" width="9" height="21" fill="#f9ba8f"/>
<rect x="485" y="1054" width="11" height="23" fill="#fcdac4"/>
<rect x="486" y="1055" width="9" height="21" fill="#f9ba8f"/>
<rect x="485" y="1076" width="11" height="23" fill="#fcdac4"/>
<rect x="486" y="1077" width="9" height="21" fill="#f9ba8f"/>
<g fill="#3a3d48" opacity=".75"><rect x="80" y="482" width="13" height="1"/><rect x="82" y="570" width="5" height="1"/><rect x="91" y="570" width="1.5" height="1"/><rect x="82" y="702" width="2" height="1"/><rect x="245.5" y="746" width="11.2" height="1"/><rect x="245.5" y="790" width="9" height="1"/><rect x="245.5" y="1010" width="6.5" height="1"/><rect x="248" y="1076" width="4" height="1"/><rect x="259" y="482" width="12.5" height="1"/><rect x="259" y="504" width="4" height="1"/><rect x="261" y="570" width="2" height="1"/><rect x="267.5" y="504" width="2" height="1"/><rect x="269.5" y="504" width="2.2" height="1"/><rect x="271.7" y="526" width="4.8" height="1"/><rect x="274" y="768" width="2.5" height="1"/><rect x="276.5" y="526" width="3.5" height="1"/><rect x="278" y="636" width="2" height="1"/><rect x="280" y="526" width="2.7" height="1"/><rect x="282.7" y="526" width="2.3" height="1"/><rect x="285" y="526" width="2" height="1"/><rect x="287" y="526" width="1.7" height="1"/><rect x="288.7" y="526" width="7.3" height="1"/><rect x="289" y="636" width="4.5" height="1"/><rect x="313.2" y="526" width="4.5" height="1"/><rect x="317.7" y="526" width="1.8" height="1"/><rect x="319.5" y="526" width="2.5" height="1"/><rect x="322" y="526" width="2" height="1"/><rect x="324" y="526" width="2" height="1"/><rect x="326" y="526" width="5" height="1"/><rect x="326" y="636" width="1.5" height="1"/><rect x="331" y="548" width="2" height="1"/><rect x="333" y="548" width="8.5" height="1"/><rect x="341.5" y="570" width="11" height="1"/><rect x="341.5" y="702" width="8.5" height="1"/><rect x="333" y="724" width="6" height="1"/><rect x="328" y="636" width="2.5" height="1"/><rect x="333" y="768" width="4" height="1"/><rect x="343" y="768" width="7" height="1"/><rect x="344" y="790" width="4" height="1"/><rect x="346" y="856" width="2" height="1"/><rect x="352.5" y="570" width="1.8" height="1"/><rect x="354.7" y="526" width="2" height="1"/><rect x="356.7" y="526" width="2" height="1"/><rect x="354.7" y="592" width="4.8" height="1"/><rect x="346" y="724" width="3.5" height="1"/><rect x="346" y="790" width="2" height="1"/><rect x="355" y="680" width="1.5" height="1"/><rect x="361" y="724" width="15.5" height="1"/><rect x="361" y="790" width="7" height="1"/><rect x="361" y="834" width="2.5" height="1"/><rect x="365" y="834" width="2.5" height="1"/><rect x="370" y="790" width="6" height="1"/><rect x="372" y="812" width="4" height="1"/><rect x="372" y="900" width="2" height="1"/><rect x="409.5" y="746" width="36.5" height="1"/><rect x="409.5" y="768" width="12.5" height="1"/><rect x="424" y="768" width="22" height="1"/><rect x="387.5" y="790" width="32.5" height="1"/><rect x="422" y="790" width="13.5" height="1"/><rect x="437.5" y="790" width="8.5" height="1"/><rect x="387.5" y="812" width="15" height="1"/><rect x="404.5" y="812" width="15.5" height="1"/><rect x="387.5" y="834" width="4" height="1"/><rect x="389.5" y="856" width="2" height="1"/><rect x="393.5" y="834" width="9" height="1"/><rect x="393.5" y="878" width="2.5" height="1"/><rect x="398" y="878" width="4.5" height="1"/><rect x="398" y="944" width="2" height="1"/><rect x="404.5" y="834" width="9" height="1"/><rect x="404.5" y="900" width="6.5" height="1"/><rect x="404.5" y="922" width="4" height="1"/><rect x="416" y="834" width="2.5" height="1"/><rect x="424" y="856" width="2" height="1"/><rect x="428" y="856" width="4.5" height="1"/><rect x="437.5" y="878" width="4.5" height="1"/><rect x="439.5" y="900" width="1.5" height="1"/><rect x="445" y="878" width="1" height="1"/><rect x="448.5" y="614" width="8" height="1"/><rect x="468" y="548" width="10.5" height="1"/><rect x="466.5" y="592" width="3.5" height="1"/><rect x="474" y="592" width="4.5" height="1"/><rect x="468" y="614" width="1.5" height="1"/><rect x="485" y="1098" width="11" height="1"/><rect x="478.5" y="790" width="2" height="1"/><rect x="481" y="878" width="2" height="1"/><rect x="483" y="988" width="2" height="1"/><rect x="513.5" y="548" width="2" height="1"/><rect x="506.5" y="614" width="2" height="1"/><rect x="518" y="790" width="9" height="1"/><rect x="518" y="1032" width="6.5" height="1"/><rect x="531" y="636" width="6.5" height="1"/><rect x="533.5" y="790" width="2" height="1"/><rect x="531.5" y="790" width="1.5" height="1"/><rect x="542" y="526" width="8.5" height="1"/><rect x="540.5" y="548" width="8.5" height="1"/><rect x="551" y="548" width="5.5" height="1"/><rect x="543.5" y="570" width="5.5" height="1"/><rect x="542.5" y="592" width="1.5" height="1"/><rect x="553" y="614" width="1.5" height="1"/><rect x="557" y="614" width="9" height="1"/><rect x="558" y="680" width="4" height="1"/><rect x="729.3" y="548" width="4.2" height="1"/><rect x="729.3" y="592" width="2.3" height="1"/><rect x="734" y="614" width="2" height="1"/><rect x="734.5" y="746" width="6" height="1"/><rect x="734.5" y="768" width="1.5" height="1"/><rect x="769" y="526" width="23.5" height="1"/><rect x="756.5" y="548" width="51" height="1"/><rect x="756.5" y="570" width="25.5" height="1"/><rect x="762" y="592" width="20" height="1"/><rect x="784" y="548" width="15" height="1"/><rect x="801" y="548" width="6.5" height="1"/><rect x="763" y="614" width="6" height="1"/><rect x="762" y="702" width="4.5" height="1"/><rect x="771" y="614" width="11" height="1"/><rect x="773" y="702" width="9" height="1"/><rect x="773" y="724" width="6.5" height="1"/><rect x="784" y="614" width="6.5" height="1"/><rect x="784" y="636" width="2" height="1"/><rect x="788.5" y="636" width="2" height="1"/><rect x="793" y="614" width="2" height="1"/><rect x="797" y="614" width="2" height="1"/><rect x="801" y="658" width="3" height="1"/><rect x="806" y="658" width="1.5" height="1"/><rect x="823.5" y="526" width="36.5" height="1"/><rect x="823.5" y="614" width="12.5" height="1"/><rect x="838.5" y="614" width="21.5" height="1"/><rect x="823.5" y="636" width="6" height="1"/><rect x="831.5" y="636" width="4.5" height="1"/><rect x="823.5" y="658" width="2" height="1"/><rect x="827" y="658" width="2.5" height="1"/><rect x="832" y="680" width="2" height="1"/><rect x="838.5" y="702" width="10.5" height="1"/><rect x="851.5" y="702" width="8.5" height="1"/><rect x="840.5" y="746" width="2" height="1"/><rect x="845" y="746" width="4.5" height="1"/><rect x="853.5" y="746" width="4.5" height="1"/><rect x="856" y="856" width="1.5" height="1"/><rect x="806" y="702" width="1.5" height="1"/><rect x="878.5" y="504" width="7.5" height="1"/><rect x="880" y="548" width="6" height="1"/><rect x="882" y="570" width="2" height="1"/><rect x="936.5" y="504" width="7.5" height="1"/><rect x="930" y="548" width="9" height="1"/><rect x="929" y="592" width="7.5" height="1"/><rect x="940.5" y="570" width="3.5" height="1"/><rect x="940.5" y="592" width="2" height="1"/><rect x="886.5" y="570" width="13" height="1"/><rect x="889" y="614" width="5" height="1"/><rect x="896" y="614" width="40.5" height="1"/><rect x="896" y="636" width="10" height="1"/><rect x="908" y="636" width="28.5" height="1"/><rect x="908" y="680" width="2" height="1"/><rect x="912" y="680" width="24.5" height="1"/><rect x="889" y="702" width="11" height="1"/><rect x="886.5" y="702" width="2" height="1"/><rect x="895" y="724" width="4.5" height="1"/><rect x="895" y="812" width="2" height="1"/><rect x="901.5" y="702" width="4.5" height="1"/><rect x="908" y="702" width="2" height="1"/><rect x="912" y="702" width="6.5" height="1"/><rect x="912" y="768" width="3" height="1"/><rect x="919" y="702" width="9" height="1"/><rect x="919" y="768" width="2" height="1"/><rect x="923.5" y="768" width="2" height="1"/><rect x="928" y="702" width="8.5" height="1"/><rect x="930" y="724" width="6.5" height="1"/><rect x="932" y="834" width="4.5" height="1"/><rect x="963" y="504" width="5" height="1"/><rect x="945.5" y="570" width="15" height="1"/><rect x="949.5" y="614" width="11" height="1"/><rect x="945.5" y="614" width="1.5" height="1"/><rect x="971" y="856" width="7" height="1"/><rect x="969.5" y="658" width="2" height="1"/><rect x="1035" y="482" width="4" height="1"/><rect x="1006.5" y="504" width="21" height="1"/><rect x="1004" y="548" width="14" height="1"/><rect x="1019" y="548" width="6.5" height="1"/><rect x="1004" y="614" width="10.5" height="1"/><rect x="1004" y="636" width="5" height="1"/><rect x="1011" y="636" width="3" height="1"/><rect x="1004" y="680" width="3.5" height="1"/><rect x="1029" y="504" width="6" height="1"/><rect x="1037" y="504" width="14.5" height="1"/><rect x="1037" y="526" width="10.5" height="1"/><rect x="1037" y="592" width="8" height="1"/><rect x="1040.5" y="636" width="4.5" height="1"/><rect x="1036.5" y="636" width="2" height="1"/></g>
<g fill="#3a3d48"><rect x="80" y="483" width="13" height="88"/><rect x="82" y="571" width="5" height="132"/><rect x="91" y="571" width="1.5" height="44"/><rect x="82" y="703" width="2" height="418"/><rect x="245.5" y="747" width="11.2" height="44"/><rect x="245.5" y="791" width="9" height="220"/><rect x="245.5" y="1011" width="6.5" height="66"/><rect x="248" y="1077" width="4" height="44"/><rect x="259" y="483" width="12.5" height="22"/><rect x="259" y="505" width="4" height="66"/><rect x="261" y="571" width="2" height="22"/><rect x="267.5" y="505" width="2" height="594"/><rect x="269.5" y="505" width="2.2" height="44"/><rect x="271.7" y="527" width="4.8" height="242"/><rect x="274" y="769" width="2.5" height="22"/><rect x="276.5" y="527" width="3.5" height="110"/><rect x="278" y="637" width="2" height="176"/><rect x="280" y="527" width="2.7" height="88"/><rect x="282.7" y="527" width="2.3" height="132"/><rect x="285" y="527" width="2" height="44"/><rect x="287" y="527" width="1.7" height="22"/><rect x="288.7" y="527" width="7.3" height="110"/><rect x="289" y="637" width="4.5" height="44"/><rect x="313.2" y="527" width="4.5" height="66"/><rect x="317.7" y="527" width="1.8" height="44"/><rect x="319.5" y="527" width="2.5" height="88"/><rect x="322" y="527" width="2" height="66"/><rect x="324" y="527" width="2" height="44"/><rect x="326" y="527" width="5" height="110"/><rect x="326" y="637" width="1.5" height="22"/><rect x="331" y="549" width="2" height="66"/><rect x="333" y="549" width="8.5" height="176"/><rect x="341.5" y="571" width="11" height="132"/><rect x="341.5" y="703" width="8.5" height="66"/><rect x="333" y="725" width="6" height="66"/><rect x="328" y="637" width="2.5" height="176"/><rect x="333" y="769" width="4" height="352"/><rect x="343" y="769" width="7" height="22"/><rect x="344" y="791" width="4" height="66"/><rect x="346" y="857" width="2" height="66"/><rect x="352.5" y="571" width="1.8" height="66"/><rect x="354.7" y="527" width="2" height="198"/><rect x="356.7" y="527" width="2" height="66"/><rect x="354.7" y="593" width="4.8" height="88"/><rect x="346" y="725" width="3.5" height="66"/><rect x="346" y="791" width="2" height="132"/><rect x="355" y="681" width="1.5" height="44"/><rect x="361" y="725" width="15.5" height="66"/><rect x="361" y="791" width="7" height="44"/><rect x="361" y="835" width="2.5" height="22"/><rect x="365" y="835" width="2.5" height="88"/><rect x="370" y="791" width="6" height="22"/><rect x="372" y="813" width="4" height="88"/><rect x="372" y="901" width="2" height="22"/><rect x="409.5" y="747" width="36.5" height="22"/><rect x="409.5" y="769" width="12.5" height="22"/><rect x="424" y="769" width="22" height="22"/><rect x="387.5" y="791" width="32.5" height="22"/><rect x="422" y="791" width="13.5" height="66"/><rect x="437.5" y="791" width="8.5" height="88"/><rect x="387.5" y="813" width="15" height="22"/><rect x="404.5" y="813" width="15.5" height="22"/><rect x="387.5" y="835" width="4" height="22"/><rect x="389.5" y="857" width="2" height="88"/><rect x="393.5" y="835" width="9" height="44"/><rect x="393.5" y="879" width="2.5" height="110"/><rect x="398" y="879" width="4.5" height="66"/><rect x="398" y="945" width="2" height="88"/><rect x="404.5" y="835" width="9" height="66"/><rect x="404.5" y="901" width="6.5" height="22"/><rect x="404.5" y="923" width="4" height="22"/><rect x="416" y="835" width="2.5" height="22"/><rect x="424" y="857" width="2" height="44"/><rect x="428" y="857" width="4.5" height="88"/><rect x="437.5" y="879" width="4.5" height="22"/><rect x="439.5" y="901" width="1.5" height="22"/><rect x="445" y="879" width="1" height="110"/><rect x="448.5" y="615" width="8" height="88"/><rect x="468" y="549" width="10.5" height="44"/><rect x="466.5" y="593" width="3.5" height="22"/><rect x="474" y="593" width="4.5" height="44"/><rect x="468" y="615" width="1.5" height="154"/><rect x="485" y="1099" width="11" height="22"/><rect x="478.5" y="791" width="2" height="44"/><rect x="481" y="879" width="2" height="110"/><rect x="483" y="989" width="2" height="66"/><rect x="513.5" y="549" width="2" height="22"/><rect x="506.5" y="615" width="2" height="22"/><rect x="518" y="791" width="9" height="242"/><rect x="518" y="1033" width="6.5" height="88"/><rect x="531" y="637" width="6.5" height="154"/><rect x="533.5" y="791" width="2" height="22"/><rect x="531.5" y="791" width="1.5" height="220"/><rect x="542" y="527" width="8.5" height="22"/><rect x="540.5" y="549" width="8.5" height="22"/><rect x="551" y="549" width="5.5" height="66"/><rect x="543.5" y="571" width="5.5" height="22"/><rect x="542.5" y="593" width="1.5" height="22"/><rect x="553" y="615" width="1.5" height="88"/><rect x="557" y="615" width="9" height="66"/><rect x="558" y="681" width="4" height="44"/><rect x="729.3" y="549" width="4.2" height="44"/><rect x="729.3" y="593" width="2.3" height="176"/><rect x="734" y="615" width="2" height="110"/><rect x="734.5" y="747" width="6" height="22"/><rect x="734.5" y="769" width="1.5" height="22"/><rect x="769" y="527" width="23.5" height="22"/><rect x="756.5" y="549" width="51" height="22"/><rect x="756.5" y="571" width="25.5" height="22"/><rect x="762" y="593" width="20" height="22"/><rect x="784" y="549" width="15" height="66"/><rect x="801" y="549" width="6.5" height="110"/><rect x="763" y="615" width="6" height="88"/><rect x="762" y="703" width="4.5" height="88"/><rect x="771" y="615" width="11" height="88"/><rect x="773" y="703" width="9" height="22"/><rect x="773" y="725" width="6.5" height="22"/><rect x="784" y="615" width="6.5" height="22"/><rect x="784" y="637" width="2" height="154"/><rect x="788.5" y="637" width="2" height="66"/><rect x="793" y="615" width="2" height="22"/><rect x="797" y="615" width="2" height="22"/><rect x="801" y="659" width="3" height="66"/><rect x="806" y="659" width="1.5" height="66"/><rect x="823.5" y="527" width="36.5" height="88"/><rect x="823.5" y="615" width="12.5" height="22"/><rect x="838.5" y="615" width="21.5" height="88"/><rect x="823.5" y="637" width="6" height="22"/><rect x="831.5" y="637" width="4.5" height="44"/><rect x="823.5" y="659" width="2" height="176"/><rect x="827" y="659" width="2.5" height="88"/><rect x="832" y="681" width="2" height="44"/><rect x="838.5" y="703" width="10.5" height="44"/><rect x="851.5" y="703" width="8.5" height="44"/><rect x="840.5" y="747" width="2" height="22"/><rect x="845" y="747" width="4.5" height="308"/><rect x="853.5" y="747" width="4.5" height="110"/><rect x="856" y="857" width="1.5" height="220"/><rect x="806" y="703" width="1.5" height="22"/><rect x="878.5" y="505" width="7.5" height="44"/><rect x="880" y="549" width="6" height="22"/><rect x="882" y="571" width="2" height="22"/><rect x="936.5" y="505" width="7.5" height="66"/><rect x="930" y="549" width="9" height="44"/><rect x="929" y="593" width="7.5" height="22"/><rect x="940.5" y="571" width="3.5" height="22"/><rect x="940.5" y="593" width="2" height="44"/><rect x="886.5" y="571" width="13" height="44"/><rect x="889" y="615" width="5" height="88"/><rect x="896" y="615" width="40.5" height="22"/><rect x="896" y="637" width="10" height="66"/><rect x="908" y="637" width="28.5" height="44"/><rect x="908" y="681" width="2" height="22"/><rect x="912" y="681" width="24.5" height="22"/><rect x="889" y="703" width="11" height="22"/><rect x="886.5" y="703" width="2" height="132"/><rect x="895" y="725" width="4.5" height="88"/><rect x="895" y="813" width="2" height="198"/><rect x="901.5" y="703" width="4.5" height="132"/><rect x="908" y="703" width="2" height="154"/><rect x="912" y="703" width="6.5" height="66"/><rect x="912" y="769" width="3" height="44"/><rect x="919" y="703" width="9" height="66"/><rect x="919" y="769" width="2" height="88"/><rect x="923.5" y="769" width="2" height="154"/><rect x="928" y="703" width="8.5" height="22"/><rect x="930" y="725" width="6.5" height="110"/><rect x="932" y="835" width="4.5" height="44"/><rect x="963" y="505" width="5" height="66"/><rect x="945.5" y="571" width="15" height="44"/><rect x="949.5" y="615" width="11" height="44"/><rect x="945.5" y="615" width="1.5" height="88"/><rect x="971" y="857" width="7" height="22"/><rect x="969.5" y="659" width="2" height="22"/><rect x="1035" y="483" width="4" height="22"/><rect x="1006.5" y="505" width="21" height="44"/><rect x="1004" y="549" width="14" height="66"/><rect x="1019" y="549" width="6.5" height="88"/><rect x="1004" y="615" width="10.5" height="22"/><rect x="1004" y="637" width="5" height="44"/><rect x="1011" y="637" width="3" height="22"/><rect x="1004" y="681" width="3.5" height="66"/><rect x="1029" y="505" width="6" height="132"/><rect x="1037" y="505" width="14.5" height="22"/><rect x="1037" y="527" width="10.5" height="66"/><rect x="1037" y="593" width="8" height="44"/><rect x="1040.5" y="637" width="4.5" height="22"/><rect x="1036.5" y="637" width="2" height="176"/></g>
<g shape-rendering="auto" opacity=".999">
<svg x="81" y="461" width="973" height="22"><text x="3" y="15.500" xml:space="preserve">total (4.52 s)</text></svg>
<svg x="94" y="483" width="152" height="22"><text x="3" y="15.500" xml:space="preserve">:Node.js:0 (708 ms)</text></svg>
<svg x="273" y="483" width="672" height="22"><text x="3" y="15.500" xml:space="preserve">node:internal/process/task_queues:processTicksAndRejections:72 (3.13 s)</text></svg>
<svg x="946" y="483" width="23" height="22"><text x="3" y="15.500" xml:space="preserve">node:internal/timers:listOnTimeout:1 (110 ms)</text></svg>
<svg x="970" y="483" width="47" height="22"><text x="3" y="15.500" xml:space="preserve">node:internal/process/task_queues:processTicksAndRejections:95 (215 ms)</text></svg>
<svg x="94" y="505" width="152" height="22"><text x="3" y="15.500" xml:space="preserve">:Garbage Collection:0 (708 ms)</text></svg>
<svg x="273" y="505" width="605" height="22"><text x="3" y="15.500" xml:space="preserve">:runMicrotasks:0 (2.81 s)</text></svg>
<svg x="887" y="505" width="50" height="22"><text x="3" y="15.500" xml:space="preserve">node:internal/timers:processTimers:514 (220 ms)</text></svg>
<svg x="970" y="505" width="36" height="22"><text x="3" y="15.500" xml:space="preserve">./build/src/database/redis.js:lockResource:402 (198 ms)</text></svg>
<svg x="360" y="527" width="86" height="22"><text x="3" y="15.500" xml:space="preserve">./build/src/database/middleware.js:loadElementsWithDependencies:1890 (612 ms)</text></svg>
<svg x="471" y="527" width="45" height="22"><text x="3" y="15.500" xml:space="preserve">./build/src/database/engine.js:elPaginate:2650 (310 ms)</text></svg>
<svg x="516" y="527" width="26" height="22"><text x="3" y="15.500" xml:space="preserve">./build/src/utils/access.js:check (88 ms)</text></svg>
<svg x="552" y="527" width="181" height="22"><text x="3" y="15.500" xml:space="preserve">./build/src/database/engine.js:elAggregationRelationsCount:3120 (402 ms)</text></svg>
<svg x="735" y="527" width="23" height="22"><text x="3" y="15.500" xml:space="preserve">./build/src/database/file-storage.js:upload (120 ms)</text></svg>
<svg x="887" y="527" width="50" height="22"><text x="3" y="15.500" xml:space="preserve">node:events:emit:513 (210 ms)</text></svg>
<svg x="970" y="527" width="36" height="22"><text x="3" y="15.500" xml:space="preserve">./build/src/database/redis.js:lockResource:402 (198 ms)</text></svg>
<svg x="360" y="549" width="86" height="22"><text x="3" y="15.500" xml:space="preserve">./build/src/database/middleware.js:loadElementsWithDependencies:1890 (612 ms)</text></svg>
<svg x="480" y="549" width="34" height="22"><text x="3" y="15.500" xml:space="preserve">./build/src/database/engine.js:elPaginate:2650 (310 ms)</text></svg>
<svg x="517" y="549" width="23" height="22"><text x="3" y="15.500" xml:space="preserve">./build/src/utils/access.js:check (88 ms)</text></svg>
<svg x="558" y="549" width="172" height="22"><text x="3" y="15.500" xml:space="preserve">./build/src/database/engine.js:elAggregationRelationsCount:3120 (402 ms)</text></svg>
<svg x="735" y="549" width="21" height="22"><text x="3" y="15.500" xml:space="preserve">./build/src/database/file-storage.js:upload (120 ms)</text></svg>
<svg x="900" y="549" width="30" height="22"><text x="3" y="15.500" xml:space="preserve">./build/src/manager/taskManager.js (96 ms)</text></svg>
<svg x="970" y="549" width="34" height="22"><text x="3" y="15.500" xml:space="preserve">./build/src/database/redis.js:lockResource:402 (198 ms)</text></svg>
<svg x="360" y="571" width="86" height="22"><text x="3" y="15.500" xml:space="preserve">./build/src/database/middleware.js:loadElementsWithDependencies:1890 (612 ms)</text></svg>
<svg x="480" y="571" width="30" height="22"><text x="3" y="15.500" xml:space="preserve">./build/src/database/engine.js:elPaginate:2650 (310 ms)</text></svg>
<svg x="558" y="571" width="172" height="22"><text x="3" y="15.500" xml:space="preserve">./build/src/database/engine.js:elAggregationRelationsCount:3120 (402 ms)</text></svg>
<svg x="735" y="571" width="21" height="22"><text x="3" y="15.500" xml:space="preserve">./build/src/database/file-storage.js:upload (120 ms)</text></svg>
<svg x="900" y="571" width="30" height="22"><text x="3" y="15.500" xml:space="preserve">./build/src/manager/taskManager.js (96 ms)</text></svg>
<svg x="970" y="571" width="34" height="22"><text x="3" y="15.500" xml:space="preserve">./build/src/database/redis.js:lockResource:402 (198 ms)</text></svg>
<svg x="360" y="593" width="86" height="22"><text x="3" y="15.500" xml:space="preserve">./build/src/database/middleware.js:loadElementsWithDependencies:1890 (612 ms)</text></svg>
<svg x="480" y="593" width="29" height="22"><text x="3" y="15.500" xml:space="preserve">./build/src/database/engine.js:elPaginate:2650 (310 ms)</text></svg>
<svg x="735" y="593" width="21" height="22"><text x="3" y="15.500" xml:space="preserve">./build/src/database/file-storage.js:upload (120 ms)</text></svg>
<svg x="970" y="593" width="34" height="22"><text x="3" y="15.500" xml:space="preserve">./build/src/database/redis.js:lockResource:402 (198 ms)</text></svg>
<svg x="360" y="615" width="86" height="22"><text x="3" y="15.500" xml:space="preserve">./build/src/database/middleware.js:loadElementsWithDependencies:1890 (612 ms)</text></svg>
<svg x="480" y="615" width="26" height="22"><text x="3" y="15.500" xml:space="preserve">./build/src/database/engine.js:elPaginate:2650 (310 ms)</text></svg>
<svg x="970" y="615" width="34" height="22"><text x="3" y="15.500" xml:space="preserve">./build/src/database/redis.js:lockResource:402 (198 ms)</text></svg>
<svg x="360" y="637" width="86" height="22"><text x="3" y="15.500" xml:space="preserve">./build/src/database/middleware.js:loadElementsWithDependencies:1890 (612 ms)</text></svg>
<svg x="480" y="637" width="23" height="22"><text x="3" y="15.500" xml:space="preserve">./build/src/database/engine.js:elPaginate:2650 (310 ms)</text></svg>
<svg x="970" y="637" width="34" height="22"><text x="3" y="15.500" xml:space="preserve">./build/src/database/redis.js:lockResource:402 (198 ms)</text></svg>
<svg x="362" y="659" width="84" height="22"><text x="3" y="15.500" xml:space="preserve">./build/src/database/middleware.js:loadElementsWithDependencies:1890 (612 ms)</text></svg>
<svg x="480" y="659" width="23" height="22"><text x="3" y="15.500" xml:space="preserve">./build/src/database/engine.js:elPaginate:2650 (310 ms)</text></svg>
<svg x="972" y="659" width="32" height="22"><text x="3" y="15.500" xml:space="preserve">./build/src/database/redis.js:lockResource:402 (198 ms)</text></svg>
<svg x="377" y="681" width="69" height="22"><text x="3" y="15.500" xml:space="preserve">./build/src/database/middleware.js:loadElementWithDependencies:1822 (540 ms)</text></svg>
<svg x="480" y="681" width="23" height="22"><text x="3" y="15.500" xml:space="preserve">./build/src/database/engine.js:elPaginate:2650 (310 ms)</text></svg>
<svg x="972" y="681" width="32" height="22"><text x="3" y="15.500" xml:space="preserve">./build/src/database/redis.js:lockResource:402 (198 ms)</text></svg>
<svg x="388" y="703" width="32" height="22"><text x="3" y="15.500" xml:space="preserve">./build/src/database/engine.js:elFindByIds:2210 (210 ms)</text></svg>
<svg x="480" y="703" width="23" height="22"><text x="3" y="15.500" xml:space="preserve">./build/src/database/engine.js:elPaginate:2650 (310 ms)</text></svg>
<svg x="972" y="703" width="32" height="22"><text x="3" y="15.500" xml:space="preserve">./build/src/database/redis.js:lockResource:402 (198 ms)</text></svg>
<svg x="480" y="725" width="23" height="22"><text x="3" y="15.500" xml:space="preserve">./build/src/database/engine.js:elPaginate:2650 (310 ms)</text></svg>
<svg x="972" y="725" width="32" height="22"><text x="3" y="15.500" xml:space="preserve">./build/src/database/redis.js:lockResource:402 (198 ms)</text></svg>
<svg x="480" y="747" width="23" height="22"><text x="3" y="15.500" xml:space="preserve">./build/src/database/engine.js:elPaginate:2650 (310 ms)</text></svg>
<svg x="972" y="747" width="32" height="22"><text x="3" y="15.500" xml:space="preserve">./build/src/database/redis.js:lockResource:402 (198 ms)</text></svg>
<svg x="480" y="769" width="23" height="22"><text x="3" y="15.500" xml:space="preserve">./build/src/database/engine.js:elPaginate:2650 (310 ms)</text></svg>
<svg x="972" y="769" width="32" height="22"><text x="3" y="15.500" xml:space="preserve">./build/src/database/redis.js:lockResource:402 (198 ms)</text></svg>
<svg x="972" y="791" width="32" height="22"><text x="3" y="15.500" xml:space="preserve">./build/src/database/redis.js:lockResource:402 (198 ms)</text></svg>
<svg x="972" y="813" width="28" height="22"><text x="3" y="15.500" xml:space="preserve">js-to-wasm:0 (44 ms)</text></svg>
<svg x="972" y="835" width="28" height="22"><text x="3" y="15.500" xml:space="preserve">wasm-function[48]:0 (44 ms)</text></svg>
</g>
</svg>
</body>
</html>
